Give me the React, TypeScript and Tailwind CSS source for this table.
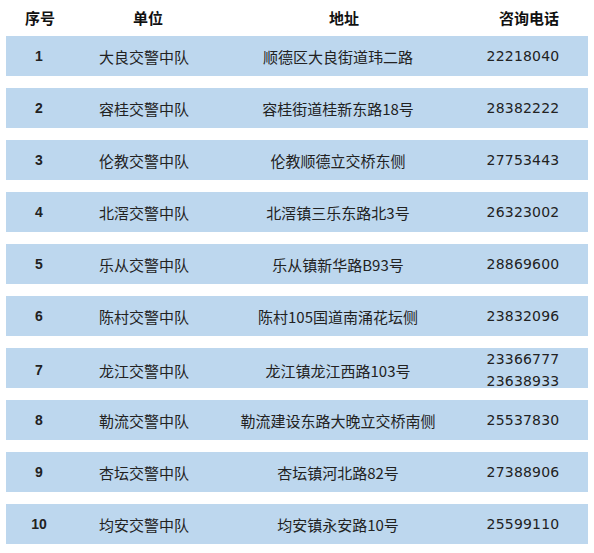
import React from "react";

const rows: { n: string; unit: string; addr: string; phone: string[] }[] = [
  { n: "1", unit: "大良交警中队", addr: "顺德区大良街道玮二路", phone: ["22218040"] },
  { n: "2", unit: "容桂交警中队", addr: "容桂街道桂新东路18号", phone: ["28382222"] },
  { n: "3", unit: "伦教交警中队", addr: "伦教顺德立交桥东侧", phone: ["27753443"] },
  { n: "4", unit: "北滘交警中队", addr: "北滘镇三乐东路北3号", phone: ["26323002"] },
  { n: "5", unit: "乐从交警中队", addr: "乐从镇新华路B93号", phone: ["28869600"] },
  { n: "6", unit: "陈村交警中队", addr: "陈村105国道南涌花坛侧", phone: ["23832096"] },
  { n: "7", unit: "龙江交警中队", addr: "龙江镇龙江西路103号", phone: ["23366777", "23638933"] },
  { n: "8", unit: "勒流交警中队", addr: "勒流建设东路大晚立交桥南侧", phone: ["25537830"] },
  { n: "9", unit: "杏坛交警中队", addr: "杏坛镇河北路82号", phone: ["27388906"] },
  { n: "10", unit: "均安交警中队", addr: "均安镇永安路10号", phone: ["25599110"] },
];

const cols = "grid grid-cols-[66px_144px_244px_126px]";

export default function App() {
  return (
    <div
      className="w-[594px] h-[553px] bg-white px-[6px] text-[#222]"
      style={{ fontFamily: '"Noto Sans CJK SC", "Noto Sans", sans-serif' }}
    >
      <div className={`${cols} h-[36px] items-center text-[15px] font-bold text-[#111]`}>
        <div className="text-center pl-[2px]">序号</div>
        <div className="text-center pl-[8px]">单位</div>
        <div className="text-center pl-[12px]">地址</div>
        <div className="text-center pl-[12px]">咨询电话</div>
      </div>
      <div className="flex flex-col gap-[12px]">
        {rows.map((r) => (
          <div key={r.n} className={`${cols} h-[40px] items-center bg-[#bdd7ee]`}>
            <div
              className="text-center text-[14px] font-semibold"
              style={{ fontFamily: '"Liberation Sans", Arial, sans-serif' }}
            >
              {r.n}
            </div>
            <div className="text-center text-[15px] leading-none">{r.unit}</div>
            <div className="text-center text-[15px] leading-none">{r.addr}</div>
            <div
              className="flex flex-col items-center text-[14px] leading-[22px] tracking-[0.2px]"
              style={{ fontFamily: '"DejaVu Sans", sans-serif' }}
            >
              {r.phone.map((p) => (
                <span key={p}>{p}</span>
              ))}
            </div>
          </div>
        ))}
      </div>
    </div>
  );
}
